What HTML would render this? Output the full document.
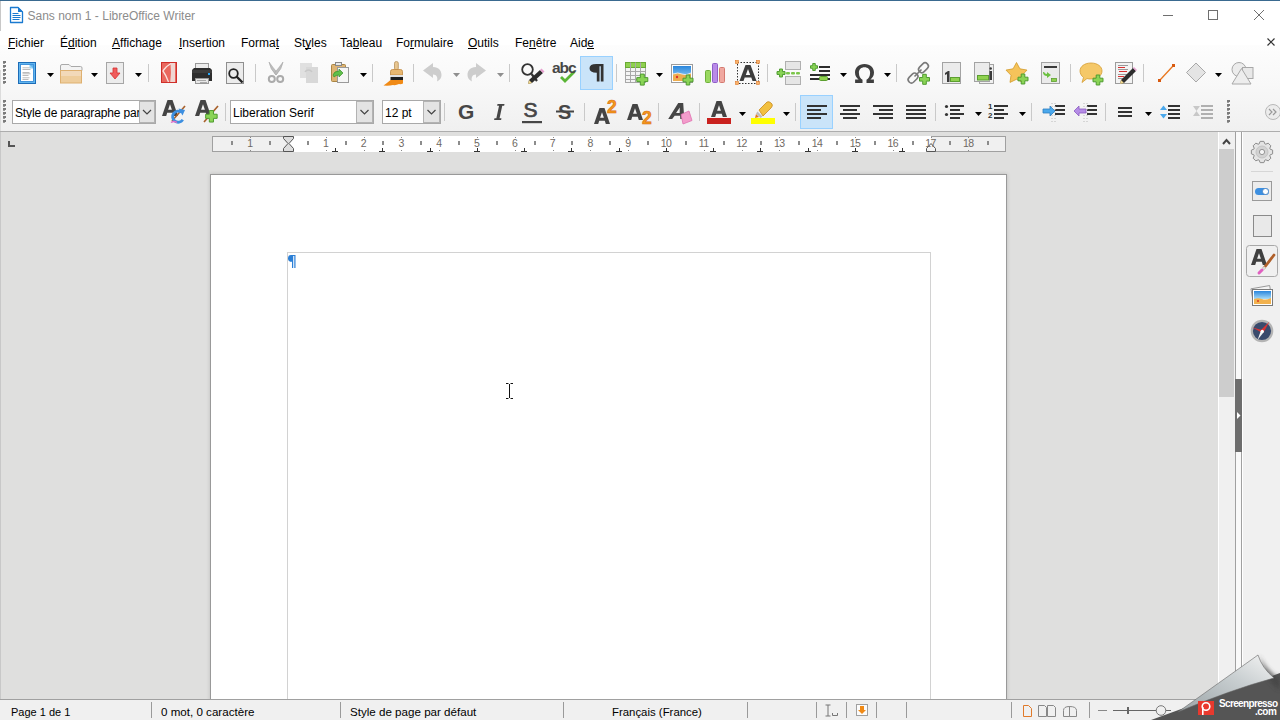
<!DOCTYPE html>
<html><head><meta charset="utf-8">
<style>
*{box-sizing:border-box}
html,body{margin:0;padding:0}
body{width:1280px;height:720px;position:relative;overflow:hidden;background:#dfdfde;font-family:"Liberation Sans",sans-serif;font-size:12px;color:#000}
.a{position:absolute}
.t{position:absolute;white-space:pre;line-height:12px}
u{text-decoration:none;position:relative}u::after{content:"";position:absolute;left:0;right:0;bottom:1px;height:1px;background:#000}
svg{position:absolute;overflow:visible}
.sep{position:absolute;width:1px;background:#c8c8c8}
.arr{position:absolute;width:0;height:0;border-left:3.5px solid transparent;border-right:3.5px solid transparent;border-top:4px solid #000}
.combo{position:absolute;background:#fff;border:1px solid #a9a9a9;height:24px}
.combo .btn{position:absolute;right:0;top:0;bottom:0;background:#e3e3e3;border-left:1px solid #b9b9b9}
.grip{position:absolute;width:3px}
.grip i{position:absolute;left:0;width:3px;height:2px;background:#8c8c8c}
.st{position:absolute;white-space:pre;line-height:12px;font-size:11.6px;top:706px}
.ssep{position:absolute;top:702px;height:16px;width:1px;background:#9a9a9a}
</style></head><body>
<!-- title bar -->
<div class="a" style="left:0;top:0;width:1280px;height:45px;background:#fff"></div>
<div class="a" style="left:0;top:0;width:1280px;height:1px;background:#3a6a90"></div>
<div class="a" style="left:0;top:1px;width:1px;height:30px;background:#c8c8c8"></div>
<div class="t" style="left:27.5px;top:10px;color:#8c8c8c">Sans nom 1 - LibreOffice Writer</div>

<!-- toolbar gradient -->
<div class="a" style="left:0;top:45px;width:1280px;height:86px;background:linear-gradient(#fdfdfd 0px,#fbfbfb 14px,#f8f8f8 40px,#f0f0f0 86px)"></div>
<div class="a" style="left:0;top:131px;width:1280px;height:1px;background:#adadad"></div>

<!-- menu -->
<div class="t" style="left:8px;top:37px"><u>F</u>ichier</div>
<div class="t" style="left:60px;top:37px">É<u>d</u>ition</div>
<div class="t" style="left:112px;top:37px"><u>A</u>ffichage</div>
<div class="t" style="left:179px;top:37px"><u>I</u>nsertion</div>
<div class="t" style="left:241px;top:37px">Forma<u>t</u></div>
<div class="t" style="left:294px;top:37px">St<u>y</u>les</div>
<div class="t" style="left:340px;top:37px">Ta<u>b</u>leau</div>
<div class="t" style="left:396px;top:37px">Fo<u>r</u>mulaire</div>
<div class="t" style="left:468px;top:37px"><u>O</u>utils</div>
<div class="t" style="left:515px;top:37px">Fe<u>n</u>être</div>
<div class="t" style="left:570px;top:37px">Aid<u>e</u></div>

<!-- doc area -->
<div class="a" style="left:0;top:132px;width:1218px;height:567px;background:#dfdfde"></div>
<div class="a" style="left:0;top:132px;width:1px;height:567px;background:#c8c8c8"></div>

<!-- page -->
<div class="a" style="left:210px;top:174px;width:797px;height:540px;background:#fff;border:1px solid #999;box-shadow:0 0 4px rgba(0,0,0,.16)"></div>
<div class="a" style="left:287px;top:252px;width:644px;height:460px;border:1px solid #d2d2d2;border-bottom:none"></div>

<!-- status bar -->
<div class="a" style="left:0;top:699px;width:1280px;height:21px;background:#f0f0f0;border-top:1px solid #a0a0a0"></div>
<div class="st" style="left:11px;font-size:11px">Page 1 de 1</div>
<div class="ssep" style="left:151px"></div>
<div class="st" style="left:161px">0 mot, 0 caractère</div>
<div class="ssep" style="left:340px"></div>
<div class="st" style="left:350px">Style de page par défaut</div>
<div class="ssep" style="left:563px"></div>
<div class="st" style="left:612px;font-size:11.4px">Français (France)</div>
<div class="ssep" style="left:747px"></div>
<div class="ssep" style="left:816px"></div>
<div class="ssep" style="left:846px"></div>
<div class="ssep" style="left:876px"></div>
<div class="ssep" style="left:906px"></div>
<div class="ssep" style="left:1011px"></div>
<div class="ssep" style="left:1089px"></div>

<!-- scrollbar + sidebar -->
<div class="a" style="left:1218px;top:132px;width:1px;height:567px;background:#fff"></div>
<div class="a" style="left:1219px;top:132px;width:16px;height:567px;background:#f0f0f0"></div>
<div class="a" style="left:1219px;top:149px;width:15px;height:248px;background:#cdcdcd"></div>
<div class="a" style="left:1235px;top:132px;width:1px;height:567px;background:#a0a0a0"></div>
<div class="a" style="left:1236px;top:132px;width:5px;height:567px;background:#f9f9f9"></div>
<div class="a" style="left:1241px;top:132px;width:1px;height:567px;background:#a0a0a0"></div>
<div class="a" style="left:1242px;top:132px;width:1px;height:567px;background:#fff"></div>
<div class="a" style="left:1243px;top:132px;width:37px;height:567px;background:#f0f0f0"></div>
<div class="a" style="left:1235px;top:379px;width:7px;height:73px;background:#6d6d6d"></div>

<svg width="1280" height="720" style="position:absolute;left:0;top:0"><rect x="3" y="61" width="3" height="2" fill="#7b7b7b"/><rect x="3" y="63" width="2" height="1" fill="#9d9d9d"/>
<rect x="3" y="65" width="3" height="2" fill="#7b7b7b"/><rect x="3" y="67" width="2" height="1" fill="#9d9d9d"/>
<rect x="3" y="69" width="3" height="2" fill="#7b7b7b"/><rect x="3" y="71" width="2" height="1" fill="#9d9d9d"/>
<rect x="3" y="73" width="3" height="2" fill="#7b7b7b"/><rect x="3" y="75" width="2" height="1" fill="#9d9d9d"/>
<rect x="3" y="77" width="3" height="2" fill="#7b7b7b"/><rect x="3" y="79" width="2" height="1" fill="#9d9d9d"/>
<rect x="3" y="81" width="3" height="2" fill="#7b7b7b"/><rect x="3" y="83" width="2" height="1" fill="#9d9d9d"/>
<rect x="0" y="70" width="1" height="61" fill="#dcdcdc"/>
<rect x="18.5" y="62.5" width="17" height="21" fill="#62b6ee" stroke="#1c6cb8"/>
<rect x="20.5" y="64.5" width="13" height="17" fill="none" stroke="#3a8ad6" stroke-width="0.8"/>
<path d="M21 65h8.5l3.5 3.5v12.5h-12z" fill="#fff"/>
<path d="M29.5 65v3.5h3.5z" fill="#8fd0f4"/>
<rect x="22.5" y="67.5" width="7" height="0.7" fill="#a0a0a0"/>
<rect x="22.5" y="69" width="8" height="0.7" fill="#a0a0a0"/>
<rect x="22.5" y="72" width="7" height="0.7" fill="#a0a0a0"/>
<rect x="22.5" y="73.5" width="8" height="0.7" fill="#a0a0a0"/>
<rect x="22.5" y="75" width="6" height="0.7" fill="#a0a0a0"/>
<rect x="22.5" y="77.5" width="7" height="0.7" fill="#a0a0a0"/>
<rect x="22.5" y="79" width="6" height="0.7" fill="#a0a0a0"/>
<path d="M47 73h7l-3.5 4z" fill="#000"/>
<path d="M60.5 70.5V66q0-1.5 1.5-1.5h7l2 2h9.5q1.5 0 1.5 1.5v2.5z" fill="#f3f3f3" stroke="#a9a9a9"/>
<rect x="60.5" y="70.5" width="21" height="12.5" fill="#eecd9c" stroke="#deb070"/>
<rect x="61" y="71" width="20" height="5" fill="#f2dcc0" opacity="0.8"/>
<path d="M91 73h7l-3.5 4z" fill="#000"/>
<rect x="106.5" y="62.5" width="17" height="21" fill="#ececec" stroke="#a6a6a6"/>
<path d="M113 68h4v5h3l-5 6l-5-6h3z" fill="#f05b5b" stroke="#d63131" stroke-width="0.8"/>
<path d="M135 73h7l-3.5 4z" fill="#000"/>
<rect x="148" y="64" width="1" height="18" fill="#c9c9c9"/>
<rect x="161.5" y="62.5" width="15" height="20" fill="#e9685e" stroke="#cf2f2a"/>
<path d="M170.5 63h4.5v19h-4.8q1.3-9 .3-19z" fill="#efd6d2"/>
<path d="M171 63.5Q165.5 66.5 163 71Q166 75 168.5 82" stroke="#fbe4e0" stroke-width="1.3" fill="none"/>
<rect x="195.5" y="63.5" width="13" height="7" fill="#ededed" stroke="#999"/>
<path d="M194 68h16l2 2v11h-20v-11z" fill="#2e2e2e"/>
<rect x="192" y="70" width="20" height="3" fill="#3d3d3d"/>
<rect x="208" y="73" width="2" height="2" fill="#2aa8f8"/>
<rect x="195.5" y="78.5" width="13" height="5" fill="#e8e8e8" stroke="#999"/>
<rect x="197" y="80" width="9" height="0.8" fill="#999"/><rect x="200" y="82" width="7" height="0.8" fill="#999"/>
<rect x="226.5" y="62.5" width="17" height="21" fill="#ececec" stroke="#8f8f8f"/>
<circle cx="233.5" cy="73.5" r="4.3" fill="none" stroke="#222" stroke-width="1.8"/>
<path d="M236.5 76.5l6 6" stroke="#222" stroke-width="2.4"/>
<rect x="255" y="64" width="1" height="18" fill="#c9c9c9"/>
<path d="M269 62q1 7 7 13l1.5-2q-5-6-8.5-11z" fill="#bdbdbd" stroke="#a8a8a8" stroke-width="0.6"/>
<path d="M283 62q-1 7-7 13l-1.5-2q5-6 8.5-11z" fill="#bdbdbd" stroke="#a8a8a8" stroke-width="0.6"/>
<circle cx="271.8" cy="79" r="3" fill="none" stroke="#ababab" stroke-width="2"/>
<circle cx="280.2" cy="79" r="3" fill="none" stroke="#ababab" stroke-width="2"/>
<rect x="300" y="63" width="12" height="15" fill="#e0e0e0"/>
<rect x="306" y="67" width="12" height="16" fill="#d8d8d8"/>
<path d="M305 72a4 4 0 0 1 7 0" stroke="#c8c8c8" stroke-width="1.5" fill="none"/>
<rect x="331.5" y="64.5" width="14" height="17" rx="1" fill="#deb473" stroke="#a98545"/>
<rect x="335.5" y="62.5" width="6" height="3" fill="#e8e8e8" stroke="#888"/>
<rect x="337.5" y="67.5" width="11" height="15" fill="#f6f6f6" stroke="#9a9a9a"/>
<path d="M333 75q1-4 6-4v-2l4 4l-4 4v-2q-3 0-5 2z" fill="#5fc04a" stroke="#3c8f2a" stroke-width="0.7"/>
<path d="M360 73h7l-3.5 4z" fill="#000"/>
<rect x="372" y="64" width="1" height="18" fill="#c9c9c9"/>
<rect x="394.5" y="61.5" width="3.8" height="8.5" rx="1.8" fill="#e8c690" stroke="#b8905a" stroke-width="0.8"/>
<path d="M390.5 75V71.5q0-2 2-2h8q2 0 2 2V75z" fill="#e9b870" stroke="#c08840" stroke-width="0.8"/>
<rect x="390.5" y="75" width="12.5" height="2" fill="#e2e2e2"/>
<rect x="390.5" y="77" width="12.5" height="3" fill="#1e1e1e"/>
<path d="M390.5 80h12.5v3.5q-2 1-4 .5q-3 1.5-6 1q-4 1-9.5 .5q3-2 7-5.5z" fill="#f08a16"/>
<rect x="413" y="64" width="1" height="18" fill="#c9c9c9"/>
<path d="M423 70.5L433 63V67C439 67 441.5 71 441.5 75C441.5 78 440 80 437 81.5C438 78 437 74.5 433 74.5V78Z" fill="#cdcdcd"/>
<path d="M453 73h7l-3.5 4z" fill="#8f8f8f"/>
<path d="M423 70.5L433 63V67C439 67 441.5 71 441.5 75C441.5 78 440 80 437 81.5C438 78 437 74.5 433 74.5V78Z" fill="#cdcdcd" transform="translate(909 0) scale(-1 1)"/>
<path d="M497 73h7l-3.5 4z" fill="#8f8f8f"/>
<rect x="509" y="64" width="1" height="18" fill="#c9c9c9"/>
<circle cx="527.5" cy="69.5" r="5.3" fill="none" stroke="#333" stroke-width="1.8"/>
<path d="M531.5 74l5.5 7" stroke="#333" stroke-width="2.2"/>
<path d="M540 70l3 3l-11 10l-4 1l1-4z" fill="#2d2d2d"/>
<path d="M540 70l3 3l1.5-1.5l-3-3z" fill="#e79fd0"/>
<path d="M528 84l1-4l3 3z" fill="#f2d88f"/>
<path d="M561 77l4 4l9.5-9.5" stroke="#5ab536" stroke-width="2.8" fill="none"/>
<rect x="580.5" y="56.5" width="32" height="33" fill="#cae4f9" stroke="#99d1ff"/>
<path d="M596.5 64h7v17.5h-2.7v-15.3h-1.3v15.3h-2.7v-8.8q-7.3 0-7.3-4.4t7-4.3z" fill="#333"/>
<rect x="616" y="64" width="1" height="18" fill="#c9c9c9"/>
<rect x="625.5" y="62.5" width="20" height="20" fill="#f4f4f4" stroke="#a8a8a8"/>
<rect x="625.5" y="62.5" width="20" height="5" fill="#8fd14f" stroke="#6aa935"/>
<path d="M630.5 62.5v20" stroke="#a8a8a8"/>
<path d="M635.5 62.5v20" stroke="#a8a8a8"/>
<path d="M640.5 62.5v20" stroke="#a8a8a8"/>
<path d="M625.5 71.5h20" stroke="#a8a8a8"/>
<path d="M625.5 75.5h20" stroke="#a8a8a8"/>
<path d="M625.5 79.5h20" stroke="#a8a8a8"/>
<path d="M640.32 74.10h3.96v3.52h3.52v3.96h-3.52v3.52h-3.96v-3.52h-3.52v-3.96h3.52z" fill="#8ad456" stroke="#4f9c30" stroke-width="1" stroke-linejoin="miter"/>
<path d="M656 73h7l-3.5 4z" fill="#000"/>
<rect x="671.5" y="64.5" width="21" height="18" fill="#fff" stroke="#9c9c9c"/>
<rect x="673" y="66" width="18" height="15" fill="url(#sky)"/>
<path d="M673 74q5-2 9 0t9-1v8h-18z" fill="#eeae50"/><path d="M673 74q5-2 9 0t9-1" stroke="#f4f8fc" stroke-width="0.8" fill="none"/>
<circle cx="677" cy="77" r="1.2" fill="#e0302a"/>
<path d="M686.20 75.00h3.60v3.20h3.20v3.60h-3.20v3.20h-3.60v-3.20h-3.20v-3.60h3.20z" fill="#8ad456" stroke="#4f9c30" stroke-width="1" stroke-linejoin="miter"/>
<rect x="705.5" y="70.5" width="5" height="12" rx="1" fill="#9ad860" stroke="#6fb13c"/>
<rect x="712.5" y="63.5" width="5" height="19" rx="1" fill="#b98ae8" stroke="#8e5fc8"/>
<rect x="719.5" y="67.5" width="5" height="15" rx="1" fill="#f0a8a0" stroke="#d47a70"/>
<rect x="737.5" y="62.5" width="21" height="21" fill="none" stroke="#333" stroke-dasharray="1.5 1.5"/>
<rect x="735.5" y="60.5" width="3" height="3" fill="#f8b26a" stroke="#e07a2a" stroke-width="0.6"/>
<rect x="756.5" y="60.5" width="3" height="3" fill="#f8b26a" stroke="#e07a2a" stroke-width="0.6"/>
<rect x="735.5" y="81.5" width="3" height="3" fill="#f8b26a" stroke="#e07a2a" stroke-width="0.6"/>
<rect x="756.5" y="81.5" width="3" height="3" fill="#f8b26a" stroke="#e07a2a" stroke-width="0.6"/>
<path d="M745.5 65h5l6 16h-4l-1.2-3.5h-6.6l-1.2 3.5h-4zm2.5 4l-2.2 6h4.4z" fill="#3d3d3d"/>
<rect x="767" y="64" width="1" height="18" fill="#c9c9c9"/>
<rect x="785.5" y="61.5" width="15" height="8" fill="#e6e6e6" stroke="#b0b0b0"/>
<rect x="785.5" y="76.5" width="15" height="8" fill="#e6e6e6" stroke="#b0b0b0"/>
<rect x="786" y="72" width="4" height="2.5" rx="1" fill="#7cc64a"/>
<rect x="791" y="72" width="4" height="2.5" rx="1" fill="#7cc64a"/>
<rect x="796" y="72" width="4" height="2.5" rx="1" fill="#7cc64a"/>
<path d="M779.56 69.00h2.88v2.56h2.56v2.88h-2.56v2.56h-2.88v-2.56h-2.56v-2.88h2.56z" fill="#8ad456" stroke="#4f9c30" stroke-width="1" stroke-linejoin="miter"/>
<rect x="819" y="66" width="11" height="2" fill="#2d2d2d"/><rect x="819" y="70" width="11" height="2" fill="#2d2d2d"/>
<rect x="810" y="74" width="20" height="2" fill="#2d2d2d"/><rect x="810" y="78" width="20" height="2" fill="#2d2d2d"/>
<path d="M812.74 63.50h2.52v2.24h2.24v2.52h-2.24v2.24h-2.52v-2.24h-2.24v-2.52h2.24z" fill="#8ad456" stroke="#4f9c30" stroke-width="1" stroke-linejoin="miter"/>
<rect x="819.5" y="76.5" width="8" height="4" rx="1" fill="#8fd14f" stroke="#5c9f30"/>
<path d="M840 73h7l-3.5 4z" fill="#000"/>
<path d="M864.5 64c-6 0-9.5 3.8-9.5 8.5c0 3.5 1.8 5.7 3.6 7h-3.5v3.5h7.4v-3.2c-2-1-3.6-3.5-3.6-7c0-3.3 2.3-5.5 5.6-5.5s5.6 2.2 5.6 5.5c0 3.5-1.6 6-3.6 7v3.2h7.4v-3.5h-3.5c1.8-1.3 3.6-3.5 3.6-7c0-4.7-3.5-8.5-9.5-8.5z" fill="#3f3f3f"/>
<path d="M884 73h7l-3.5 4z" fill="#000"/>
<rect x="896" y="64" width="1" height="18" fill="#c9c9c9"/>
<rect x="918" y="64.5" width="11" height="6.5" rx="3.2" fill="none" stroke="#7a7a7a" stroke-width="1.6" transform="rotate(-45 923.5 67.8)"/>
<rect x="907.5" y="74.8" width="11" height="6.5" rx="3.2" fill="none" stroke="#7a7a7a" stroke-width="1.6" transform="rotate(-45 913 78)"/>
<path d="M914.5 76.5l7-7" stroke="#7a7a7a" stroke-width="1.6"/>
<path d="M922.70 74.30h3.60v3.20h3.20v3.60h-3.20v3.20h-3.60v-3.20h-3.20v-3.60h3.20z" fill="#8ad456" stroke="#4f9c30" stroke-width="1" stroke-linejoin="miter"/>
<rect x="942.5" y="62.5" width="18" height="21" fill="#ebebeb" stroke="#a3a3a3"/>
<path d="M945 73l3-2h1.5v11h-2.5v-8l-2 1z" fill="#3a3a3a"/>
<rect x="950.5" y="77.5" width="9" height="4" fill="#8fd14f" stroke="#5c9f30"/>
<rect x="979.5" y="64.5" width="14" height="19" fill="#f0f0f0" stroke="#a3a3a3"/>
<rect x="974.5" y="62.5" width="15" height="19" fill="#ebebeb" stroke="#a3a3a3"/>
<rect x="989.5" y="71" width="2.5" height="9" fill="#3a3a3a"/><circle cx="990.7" cy="68.5" r="1.2" fill="#3a3a3a"/>
<rect x="977.5" y="75.5" width="11" height="4.5" fill="#8fd14f" stroke="#5c9f30"/>
<polygon points="1016.5,62.5 1019.9,68.8 1027.0,70.1 1022.0,75.3 1023.0,82.4 1016.5,79.3 1010.0,82.4 1011.0,75.3 1006.0,70.1 1013.1,68.8" fill="#f5c35a" stroke="#d29a2a" stroke-width="0.8" stroke-linejoin="round"/>
<path d="M1021.20 74.00h3.60v3.20h3.20v3.60h-3.20v3.20h-3.60v-3.20h-3.20v-3.60h3.20z" fill="#8ad456" stroke="#4f9c30" stroke-width="1" stroke-linejoin="miter"/>
<rect x="1041.5" y="62.5" width="18" height="21" fill="#ebebeb" stroke="#a3a3a3"/>
<rect x="1044" y="66" width="13" height="2" fill="#3a3a3a"/>
<path d="M1043 72q0 4 4 4v2l4-3l-4-3v2q-2 0-3-2z" fill="#6cc140"/>
<rect x="1051.5" y="78.5" width="5" height="3" fill="#8fd14f" stroke="#5c9f30" stroke-width="0.8"/>
<rect x="1070" y="64" width="1" height="18" fill="#c9c9c9"/>
<path d="M1091 63c6.5 0 11 3.5 11 8s-4.5 8-11 8c-1.5 0-2.5 0-4-.5l-5 4l1.5-5c-2-1.5-3.5-4-3.5-6.5c0-4.5 4.5-8 11-8z" fill="#f5c868" stroke="#d49d33" stroke-width="0.8"/>
<path d="M1096.20 75.00h3.60v3.20h3.20v3.60h-3.20v3.20h-3.60v-3.20h-3.20v-3.60h3.20z" fill="#8ad456" stroke="#4f9c30" stroke-width="1" stroke-linejoin="miter"/>
<rect x="1115.5" y="62.5" width="17" height="21" fill="#f3f3f3" stroke="#9c9c9c"/>
<rect x="1118" y="65" width="10" height="1" fill="#999"/>
<rect x="1118" y="67" width="7" height="1" fill="#d93030"/>
<rect x="1118" y="69" width="10" height="1" fill="#999"/>
<rect x="1119" y="71" width="8" height="1" fill="#d93030"/>
<rect x="1118" y="74" width="10" height="1" fill="#999"/>
<rect x="1118" y="76" width="6" height="1" fill="#d93030"/>
<rect x="1118" y="78" width="9" height="1" fill="#999"/>
<path d="M1133 68l3 3l-12 12l-4 1l1-4z" fill="#2d2d2d"/><path d="M1133 68l3 3l1-1l-3-3z" fill="#e79fd0"/><path d="M1120 84l1-4l3 3z" fill="#f2d88f"/>
<rect x="1143" y="64" width="1" height="18" fill="#c9c9c9"/>
<path d="M1160 80l13-14" stroke="#e8761e" stroke-width="1.3"/>
<rect x="1158" y="79" width="3" height="3" fill="#d85a10"/><rect x="1172" y="64" width="3" height="3" fill="#d85a10"/>
<path d="M1196 63l9.5 9.5l-9.5 9.5l-9.5-9.5z" fill="#e4e4e4" stroke="#a8a8a8"/>
<path d="M1215 73h7l-3.5 4z" fill="#000"/>
<circle cx="1239" cy="69.5" r="7" fill="#ececec" stroke="#a8a8a8"/>
<rect x="1242.5" y="67.5" width="10.5" height="11" fill="#e8e8e8" stroke="#a8a8a8"/>
<path d="M1241.5 68.5l9.5 15.5h-19z" fill="#ededed" stroke="#a8a8a8"/>
<rect x="3" y="100" width="3" height="2" fill="#7b7b7b"/><rect x="3" y="102" width="2" height="1" fill="#9d9d9d"/>
<rect x="3" y="104" width="3" height="2" fill="#7b7b7b"/><rect x="3" y="106" width="2" height="1" fill="#9d9d9d"/>
<rect x="3" y="108" width="3" height="2" fill="#7b7b7b"/><rect x="3" y="110" width="2" height="1" fill="#9d9d9d"/>
<rect x="3" y="112" width="3" height="2" fill="#7b7b7b"/><rect x="3" y="114" width="2" height="1" fill="#9d9d9d"/>
<rect x="3" y="116" width="3" height="2" fill="#7b7b7b"/><rect x="3" y="118" width="2" height="1" fill="#9d9d9d"/>
<rect x="3" y="120" width="3" height="2" fill="#7b7b7b"/><rect x="3" y="122" width="2" height="1" fill="#9d9d9d"/>
<rect x="12.5" y="100.5" width="143" height="23" fill="#fff" stroke="#a9a9a9"/>
<rect x="139.5" y="101.5" width="15" height="21" fill="#e3e3e3" stroke="#b3b3b3"/>
<path d="M143.0 110l4 4l4-4" stroke="#444" stroke-width="1.2" fill="none"/>
<path d="M167.5 100h5l5.5 16h-4.2l-1-3.2h-5.6l-1 3.2h-4.2zm2.5 4.2l-1.9 5.5h3.8z" fill="#444"/>
<path d="M172 121l13-15" stroke="#a8602a" stroke-width="1.6"/>
<path d="M182.8 119.8a5.6 5.6 0 1 1-1.2-7.6" stroke="#3d8fe0" stroke-width="2.8" fill="none"/><path d="M178.5 108.5l6.5 1.5l-2.5 5.5z" fill="#3d8fe0"/>
<path d="M171 122.5q3-2 6 0" stroke="#e070c8" stroke-width="1.5" fill="none"/>
<path d="M200.5 100h5l5.5 16h-4.2l-1-3.2h-5.6l-1 3.2h-4.2zm2.5 4.2l-1.9 5.5h3.8z" fill="#444"/>
<path d="M204 122l14-16" stroke="#a8602a" stroke-width="1.6"/>
<path d="M209.33 110.55h4.14v3.68h3.68v4.14h-3.68v3.68h-4.14v-3.68h-3.68v-4.14h3.68z" fill="#8ad456" stroke="#4f9c30" stroke-width="1" stroke-linejoin="miter"/>
<rect x="225" y="103" width="1" height="18" fill="#c9c9c9"/>
<rect x="230.5" y="100.5" width="143" height="23" fill="#fff" stroke="#a9a9a9"/>
<rect x="356.5" y="101.5" width="16" height="21" fill="#e3e3e3" stroke="#b3b3b3"/>
<path d="M360.5 110l4 4l4-4" stroke="#444" stroke-width="1.2" fill="none"/>
<rect x="382.5" y="100.5" width="58" height="23" fill="#fff" stroke="#a9a9a9"/>
<rect x="423.5" y="101.5" width="16" height="21" fill="#e3e3e3" stroke="#b3b3b3"/>
<path d="M427.5 110l4 4l4-4" stroke="#444" stroke-width="1.2" fill="none"/>
<rect x="444" y="103" width="1" height="18" fill="#c9c9c9"/>
<path d="M497.5 104h7l-.35 1.8h-1.9l-2.7 12.4h1.9l-.35 1.8h-7l.35-1.8h1.9l2.7-12.4h-1.9z" fill="#464646"/>
<rect x="522" y="121" width="20" height="2.2" fill="#464646"/>
<rect x="556" y="110.5" width="18" height="2" fill="#464646"/>
<rect x="584" y="103" width="1" height="18" fill="#c9c9c9"/>
<path d="M599.5 108h5l5.5 16h-4.2l-1-3.2h-5.6l-1 3.2h-4.2zm2.5 4.2l-1.9 5.5h3.8z" fill="#444"/>
<path d="M632.5 104h5l5.5 16h-4.2l-1-3.2h-5.6l-1 3.2h-4.2zm2.5 4.2l-1.9 5.5h3.8z" fill="#444"/>
<rect x="658" y="103" width="1" height="18" fill="#c9c9c9"/>
<path d="M676.5 103h5l4.5 16h-4l-.9-3.2h-5.4l-1.8 3.2h-4zm2.5 4.5l-2.5 5.5h3.6z" fill="#464646" transform="translate(676 111) skewX(-12) translate(-676 -111)"/>
<path d="M681 114.5l8-3.5l3 9.5l-9 3.5z" fill="#f39ccb" stroke="#e070b0" stroke-width="0.8"/>
<rect x="699" y="103" width="1" height="18" fill="#c9c9c9"/>
<path d="M716.5 101h5l5.5 16h-4.2l-1-3.2h-5.6l-1 3.2h-4.2zm2.5 4.2l-1.9 5.5h3.8z" fill="#444"/>
<rect x="707" y="118" width="24" height="6" fill="#c9211e"/>
<path d="M739 112h7l-3.5 4z" fill="#000"/>
<path d="M759 110l8-8q2-1 4 1l1 1q1 2-1 4l-8 8z" fill="#f2c040" stroke="#c88a20" stroke-width="0.8"/>
<path d="M757.5 111.5l5 5l-2 1.5l-4.5-4.5z" fill="#bdbdbd"/><path d="M756 114l3 3l-4 1z" fill="#e07a20"/>
<rect x="751" y="118" width="24" height="6" fill="#ffff00"/>
<path d="M783 112h7l-3.5 4z" fill="#000"/>
<rect x="795" y="103" width="1" height="18" fill="#c9c9c9"/>
<rect x="800.5" y="95.5" width="32" height="33" fill="#cae4f9" stroke="#99d1ff"/>
<rect x="807" y="105" width="20" height="2" fill="#333"/>
<rect x="807" y="109" width="14" height="2" fill="#333"/>
<rect x="807" y="113" width="20" height="2" fill="#333"/>
<rect x="807" y="117" width="14" height="2" fill="#333"/>
<rect x="840" y="105" width="20" height="2" fill="#333"/>
<rect x="843" y="109" width="14" height="2" fill="#333"/>
<rect x="840" y="113" width="20" height="2" fill="#333"/>
<rect x="843" y="117" width="14" height="2" fill="#333"/>
<rect x="873" y="105" width="20" height="2" fill="#333"/>
<rect x="879" y="109" width="14" height="2" fill="#333"/>
<rect x="873" y="113" width="20" height="2" fill="#333"/>
<rect x="879" y="117" width="14" height="2" fill="#333"/>
<rect x="906" y="105" width="20" height="2" fill="#333"/>
<rect x="906" y="109" width="20" height="2" fill="#333"/>
<rect x="906" y="113" width="20" height="2" fill="#333"/>
<rect x="906" y="117" width="20" height="2" fill="#333"/>
<rect x="935" y="103" width="1" height="18" fill="#c9c9c9"/>
<circle cx="946.5" cy="106.5" r="1.6" fill="#333"/>
<circle cx="946.5" cy="114.5" r="1.6" fill="#333"/>
<rect x="950" y="105" width="14" height="2" fill="#333"/>
<rect x="950" y="109" width="10" height="2" fill="#333"/>
<rect x="950" y="113" width="14" height="2" fill="#333"/>
<rect x="950" y="117" width="10" height="2" fill="#333"/>
<path d="M975 112h7l-3.5 4z" fill="#000"/>
<rect x="994" y="105" width="14" height="2" fill="#333"/>
<rect x="994" y="109" width="10" height="2" fill="#333"/>
<rect x="994" y="113" width="14" height="2" fill="#333"/>
<rect x="994" y="117" width="10" height="2" fill="#333"/>
<path d="M1019 112h7l-3.5 4z" fill="#000"/>
<rect x="1031" y="103" width="1" height="18" fill="#c9c9c9"/>
<rect x="1055" y="105" width="10" height="2" fill="#333"/>
<rect x="1055" y="109" width="10" height="2" fill="#333"/>
<rect x="1055" y="113" width="10" height="2" fill="#333"/>
<path d="M1055 103v19M1052 103v19" stroke="#b8b8b8" stroke-width="1" stroke-dasharray="1 2"/>
<path d="M1043 109h7v-3l5 5l-5 5v-3h-7z" fill="#4aa8ec" stroke="#2e7fc0" stroke-width="0.8"/>
<rect x="1087" y="105" width="10" height="2" fill="#333"/>
<rect x="1087" y="109" width="10" height="2" fill="#333"/>
<rect x="1087" y="113" width="10" height="2" fill="#333"/>
<path d="M1087 103v19M1084 103v19" stroke="#b8b8b8" stroke-width="1" stroke-dasharray="1 2"/>
<path d="M1086 109h-7v-3l-5 5l5 5v-3h7z" fill="#b58ce6" stroke="#8a5cc0" stroke-width="0.8"/>
<rect x="1105" y="103" width="1" height="18" fill="#c9c9c9"/>
<rect x="1118" y="107" width="14" height="2" fill="#333"/>
<rect x="1118" y="111" width="14" height="2" fill="#333"/>
<rect x="1118" y="115" width="14" height="2" fill="#333"/>
<path d="M1145 112h7l-3.5 4z" fill="#000"/>
<rect x="1168" y="105" width="12" height="2" fill="#333"/>
<rect x="1168" y="109" width="12" height="2" fill="#333"/>
<rect x="1168" y="113" width="12" height="2" fill="#333"/>
<rect x="1168" y="117" width="12" height="2" fill="#333"/>
<path d="M1160 110l3.5-4.5l3.5 4.5z" fill="#4aa8ec"/><path d="M1160 114l3.5 4.5l3.5-4.5z" fill="#4aa8ec"/>
<rect x="1201" y="105" width="12" height="2" fill="#b0b0b0"/>
<rect x="1201" y="109" width="12" height="2" fill="#b0b0b0"/>
<rect x="1201" y="113" width="12" height="2" fill="#b0b0b0"/>
<rect x="1201" y="117" width="12" height="2" fill="#b0b0b0"/>
<path d="M1193 106h7l-3.5 5l3.5 5h-7l3.5-5z" fill="#c8c8c8"/>
<rect x="1227" y="100" width="3" height="2" fill="#7b7b7b"/><rect x="1227" y="102" width="2" height="1" fill="#9d9d9d"/>
<rect x="1227" y="104" width="3" height="2" fill="#7b7b7b"/><rect x="1227" y="106" width="2" height="1" fill="#9d9d9d"/>
<rect x="1227" y="108" width="3" height="2" fill="#7b7b7b"/><rect x="1227" y="110" width="2" height="1" fill="#9d9d9d"/>
<rect x="1227" y="112" width="3" height="2" fill="#7b7b7b"/><rect x="1227" y="114" width="2" height="1" fill="#9d9d9d"/>
<rect x="1227" y="116" width="3" height="2" fill="#7b7b7b"/><rect x="1227" y="118" width="2" height="1" fill="#9d9d9d"/>
<rect x="1227" y="120" width="3" height="2" fill="#7b7b7b"/><rect x="1227" y="122" width="2" height="1" fill="#9d9d9d"/>
<circle cx="1273" cy="112" r="7.5" fill="#ececec" stroke="#b8b8b8"/>
<path d="M1269 109l3 3l-3 3M1273 109l3 3l-3 3" stroke="#999" stroke-width="1.2" fill="none"/>
<path d="M8 141h2v4h5v2h-7z" fill="#555"/>
<rect x="212.5" y="136.5" width="793" height="15" fill="#fff" stroke="#a0a0a0"/>
<rect x="213" y="137" width="75" height="14" fill="#f0f0f0"/>
<rect x="931" y="137" width="74" height="14" fill="#f0f0f0"/>
<rect x="288" y="136" width="643" height="1" fill="#fff"/>
<rect x="288" y="151" width="643" height="1" fill="#fff"/>
<rect x="231" y="141" width="2" height="4" fill="#8c8c8c"/>
<rect x="250" y="137" width="1" height="1" fill="#888"/><rect x="250" y="150" width="1" height="1" fill="#888"/>
<rect x="269" y="141" width="2" height="4" fill="#8c8c8c"/>
<rect x="307" y="141" width="2" height="4" fill="#8c8c8c"/>
<rect x="326" y="137" width="1" height="1" fill="#888"/><rect x="326" y="150" width="1" height="1" fill="#888"/>
<rect x="345" y="141" width="2" height="4" fill="#8c8c8c"/>
<rect x="364" y="137" width="1" height="1" fill="#888"/><rect x="364" y="150" width="1" height="1" fill="#888"/>
<rect x="382" y="141" width="2" height="4" fill="#8c8c8c"/>
<rect x="401" y="137" width="1" height="1" fill="#888"/><rect x="401" y="150" width="1" height="1" fill="#888"/>
<rect x="420" y="141" width="2" height="4" fill="#8c8c8c"/>
<rect x="439" y="137" width="1" height="1" fill="#888"/><rect x="439" y="150" width="1" height="1" fill="#888"/>
<rect x="458" y="141" width="2" height="4" fill="#8c8c8c"/>
<rect x="477" y="137" width="1" height="1" fill="#888"/><rect x="477" y="150" width="1" height="1" fill="#888"/>
<rect x="496" y="141" width="2" height="4" fill="#8c8c8c"/>
<rect x="515" y="137" width="1" height="1" fill="#888"/><rect x="515" y="150" width="1" height="1" fill="#888"/>
<rect x="534" y="141" width="2" height="4" fill="#8c8c8c"/>
<rect x="553" y="137" width="1" height="1" fill="#888"/><rect x="553" y="150" width="1" height="1" fill="#888"/>
<rect x="571" y="141" width="2" height="4" fill="#8c8c8c"/>
<rect x="590" y="137" width="1" height="1" fill="#888"/><rect x="590" y="150" width="1" height="1" fill="#888"/>
<rect x="609" y="141" width="2" height="4" fill="#8c8c8c"/>
<rect x="628" y="137" width="1" height="1" fill="#888"/><rect x="628" y="150" width="1" height="1" fill="#888"/>
<rect x="647" y="141" width="2" height="4" fill="#8c8c8c"/>
<rect x="666" y="137" width="1" height="1" fill="#888"/><rect x="666" y="150" width="1" height="1" fill="#888"/>
<rect x="685" y="141" width="2" height="4" fill="#8c8c8c"/>
<rect x="704" y="137" width="1" height="1" fill="#888"/><rect x="704" y="150" width="1" height="1" fill="#888"/>
<rect x="723" y="141" width="2" height="4" fill="#8c8c8c"/>
<rect x="742" y="137" width="1" height="1" fill="#888"/><rect x="742" y="150" width="1" height="1" fill="#888"/>
<rect x="760" y="141" width="2" height="4" fill="#8c8c8c"/>
<rect x="779" y="137" width="1" height="1" fill="#888"/><rect x="779" y="150" width="1" height="1" fill="#888"/>
<rect x="798" y="141" width="2" height="4" fill="#8c8c8c"/>
<rect x="817" y="137" width="1" height="1" fill="#888"/><rect x="817" y="150" width="1" height="1" fill="#888"/>
<rect x="836" y="141" width="2" height="4" fill="#8c8c8c"/>
<rect x="855" y="137" width="1" height="1" fill="#888"/><rect x="855" y="150" width="1" height="1" fill="#888"/>
<rect x="874" y="141" width="2" height="4" fill="#8c8c8c"/>
<rect x="893" y="137" width="1" height="1" fill="#888"/><rect x="893" y="150" width="1" height="1" fill="#888"/>
<rect x="912" y="141" width="2" height="4" fill="#8c8c8c"/>
<rect x="931" y="137" width="1" height="1" fill="#888"/><rect x="931" y="150" width="1" height="1" fill="#888"/>
<rect x="949" y="141" width="2" height="4" fill="#8c8c8c"/>
<rect x="968" y="137" width="1" height="1" fill="#888"/><rect x="968" y="150" width="1" height="1" fill="#888"/>
<rect x="987" y="141" width="2" height="4" fill="#8c8c8c"/>
<path d="M332 151.5h6M335.5 148v3.5" stroke="#333" stroke-width="1"/>
<path d="M379 151.5h6M382.5 148v3.5" stroke="#333" stroke-width="1"/>
<path d="M427 151.5h6M430.5 148v3.5" stroke="#333" stroke-width="1"/>
<path d="M474 151.5h6M477.5 148v3.5" stroke="#333" stroke-width="1"/>
<path d="M521 151.5h6M524.5 148v3.5" stroke="#333" stroke-width="1"/>
<path d="M568 151.5h6M571.5 148v3.5" stroke="#333" stroke-width="1"/>
<path d="M616 151.5h6M619.5 148v3.5" stroke="#333" stroke-width="1"/>
<path d="M663 151.5h6M666.5 148v3.5" stroke="#333" stroke-width="1"/>
<path d="M710 151.5h6M713.5 148v3.5" stroke="#333" stroke-width="1"/>
<path d="M757 151.5h6M760.5 148v3.5" stroke="#333" stroke-width="1"/>
<path d="M805 151.5h6M808.5 148v3.5" stroke="#333" stroke-width="1"/>
<path d="M852 151.5h6M855.5 148v3.5" stroke="#333" stroke-width="1"/>
<path d="M899 151.5h6M902.5 148v3.5" stroke="#333" stroke-width="1"/>
<path d="M283.5 136.5h10v2l-4.5 5l4.5 5v3h-10v-3l4.5-5l-4.5-5z" fill="#ddd" stroke="#555" stroke-width="1"/>
<path d="M926.5 151.5v-3l4.5-5l4.5 5v3z" fill="#f4f4f4" stroke="#555" stroke-width="1"/>
<path d="M291 255h4.5v13h-1.2v-12h-1.1v12h-1.2v-6.2q-4 0-4-3.4t3-3.4z" fill="#2b7fd6"/>
<path d="M506 383.5h2.5M510.5 383.5h2.5M509.5 384v14M506 398.5h2.5M510.5 398.5h2.5" stroke="#111" stroke-width="1"/>
<path d="M1223 144l3.5-4l3.5 4" stroke="#444" stroke-width="2" fill="none"/>
<path d="M1237 412l3.5 3.5l-3.5 3.5z" fill="#fff"/>
<path d="M1270.09 149.09L1272.64 150.14L1272.64 153.86L1270.09 154.91L1269.78 155.66L1270.84 158.21L1268.21 160.84L1265.66 159.78L1264.91 160.09L1263.86 162.64L1260.14 162.64L1259.09 160.09L1258.34 159.78L1255.79 160.84L1253.16 158.21L1254.22 155.66L1253.91 154.91L1251.36 153.86L1251.36 150.14L1253.91 149.09L1254.22 148.34L1253.16 145.79L1255.79 143.16L1258.34 144.22L1259.09 143.91L1260.14 141.36L1263.86 141.36L1264.91 143.91L1265.66 144.22L1268.21 143.16L1270.84 145.79L1269.78 148.34Z" fill="#e4e4e4" stroke="#8c8c8c" stroke-width="1" stroke-linejoin="round"/>
<circle cx="1262" cy="152" r="6" fill="#d2d2d2" stroke="#c4c4c4"/><circle cx="1262" cy="152" r="2.6" fill="#f6f6f6" stroke="#8c8c8c" stroke-width="0.9"/>
<rect x="1251" y="171" width="22" height="1" fill="#d6d6d6"/>
<rect x="1252.5" y="181.5" width="19" height="19" fill="#ececec" stroke="#9a9a9a"/>
<rect x="1255" y="188" width="14" height="7" rx="3.5" fill="#3d8fe0"/><circle cx="1265.5" cy="191.5" r="3" fill="#fff" stroke="#2a6ab0" stroke-width="0.6"/>
<rect x="1253.5" y="215.5" width="18" height="21" fill="#e9e9e9" stroke="#8a8a8a"/>
<rect x="1246.5" y="245.5" width="31" height="31" rx="3" fill="#f0f0f0" stroke="#a8a8a8"/>
<path d="M1256.5 249h5l5.5 16h-4.2l-1-3.2h-5.6l-1 3.2h-4.2zm2.5 4.2l-1.9 5.5h3.8z" fill="#3f3f3f"/>
<path d="M1264 268l10-13" stroke="#b0602a" stroke-width="2.8" stroke-linecap="round"/><path d="M1262 270.5l3-3.5" stroke="#d8d8d8" stroke-width="2.6"/><path d="M1259 273l3-3" stroke="#e060c0" stroke-width="3" stroke-linecap="round"/>
<defs><linearGradient id="sky" x1="0" y1="0" x2="0" y2="1"><stop offset="0" stop-color="#2a86dc"/><stop offset="1" stop-color="#a8dcf8"/></linearGradient></defs>
<rect x="1252" y="287" width="19" height="15" fill="#f4f4f4" stroke="#8a8a8a" stroke-width="0.8" transform="rotate(-10 1262 294)"/>
<rect x="1252.5" y="289.5" width="20" height="16" fill="#fff" stroke="#7a7a7a"/>
<rect x="1254" y="291" width="17" height="8" fill="url(#sky)"/><path d="M1254 299q4-1.5 8 0t9-1v6h-17z" fill="#f2b24e"/>
<circle cx="1258" cy="301" r="1" fill="#d83a20"/>
<circle cx="1262" cy="331" r="10.2" fill="#3a4a6c" stroke="#b4b4b4" stroke-width="2.2"/>
<path d="M1269.5 321.5L1263.5 332.5L1261 330z" fill="#d93232"/><path d="M1252.5 327.5L1263 330.3L1262 332.8z" fill="#d93232"/>
<path d="M1261 330.5L1257.5 340L1263.8 332z" fill="#f4f4f4"/><circle cx="1262.3" cy="331.3" r="1.6" fill="#fff"/>
<path d="M10.5 7.5h7.5l4.5 4.5v10.5h-12z" fill="#fff" stroke="#1a7ad0" stroke-width="1.3" stroke-linejoin="round"/>
<path d="M18 7v5h5z" fill="#1a7ad0"/>
<rect x="12.5" y="13" width="6" height="1" fill="#1a7ad0"/>
<rect x="12.5" y="15" width="8" height="1" fill="#1a7ad0"/>
<rect x="12.5" y="17" width="8" height="1" fill="#1a7ad0"/>
<rect x="12.5" y="19" width="7" height="1" fill="#1a7ad0"/>
<rect x="1163" y="15" width="10" height="1" fill="#6f6f6f"/>
<rect x="1208.5" y="10.5" width="9" height="9" fill="none" stroke="#6f6f6f"/>
<path d="M1254 10l10 10M1264 10l-10 10" stroke="#6f6f6f" stroke-width="1"/>
<path d="M1267.5 38.5l7 7M1274.5 38.5l-7 7" stroke="#333" stroke-width="1.2"/>
<path d="M825.5 705h5M825.5 716h5M828 705v11" stroke="#777" stroke-width="1"/><path d="M832.5 713v2.5h5v-2.5" stroke="#777" stroke-width="1" fill="none"/>
<rect x="856.5" y="704.5" width="11" height="11" fill="#fbfbfb" stroke="#a0a0a0"/><path d="M860 706h4v4h2l-4 4l-4-4h2z" fill="#f08a16"/>
<path d="M1023.5 705.5h5l3 3v8h-8z" fill="none" stroke="#e07a2a"/>
<path d="M1038.5 705.5h6l2 2v9h-8zM1047.5 705.5h6l2 2v9h-8z" fill="none" stroke="#888"/>
<path d="M1069.5 706.5q-6 0-6 4v6h6zM1069.5 706.5q7 0 7 4v6h-7z" fill="none" stroke="#888"/>
<rect x="1098" y="710" width="9" height="1" fill="#888"/>
<rect x="1113" y="710" width="58" height="1" fill="#666"/><rect x="1127" y="707" width="2" height="7" fill="#666"/>
<circle cx="1161" cy="710.5" r="4.8" fill="#f0f0f0" stroke="#777"/>
<defs><filter id="blur" x="-50%" y="-50%" width="200%" height="200%"><feGaussianBlur stdDeviation="2"/></filter></defs>
<path d="M1151 720L1280 673V720z" fill="#555"/>
<path d="M1259 655Q1264 668 1278 678L1280 674L1280 690Q1266 683 1259 655z" fill="#444" filter="url(#blur)" opacity="0.8"/>
<defs><linearGradient id="cg" x1="0" y1="1" x2="1" y2="0"><stop offset="0" stop-color="#9aa3a6"/><stop offset="0.6" stop-color="#c9cfd1"/><stop offset="1" stop-color="#f4f4f4"/></linearGradient></defs>
<path d="M1178 712L1258 655Q1262 668 1274 678Q1230 690 1178 712z" fill="url(#cg)" stroke="#666" stroke-width="0.6"/>
<rect x="1198" y="701" width="16" height="14" fill="#e8392e"/>
<circle cx="1206" cy="706.5" r="3.8" fill="none" stroke="#fff" stroke-width="1.6"/><path d="M1202.8 707v8" stroke="#fff" stroke-width="1.6"/><circle cx="1206.5" cy="706" r="1.2" fill="#e8392e"/></svg>
<div class="t" style="left:552px;top:60px;font-size:15.5px;line-height:15px;font-weight:bold;color:#464646;letter-spacing:-1.1px">abc</div>
<div class="t" style="left:15px;top:107px;width:124px;overflow:hidden;letter-spacing:-0.15px">Style de paragraphe par défaut</div>
<div class="t" style="left:233px;top:107px;width:123px;overflow:hidden;letter-spacing:0px">Liberation Serif</div>
<div class="t" style="left:385px;top:107px;width:38px;overflow:hidden;letter-spacing:0px">12 pt</div>
<div class="t" style="left:458px;top:103px;font-size:21px;line-height:18px;font-weight:bold;color:#464646">G</div>
<div class="t" style="left:523.5px;top:101px;font-size:21px;line-height:18px;color:#464646;-webkit-text-stroke:0.7px #464646">S</div>
<div class="t" style="left:558px;top:103px;font-size:20px;line-height:18px;font-weight:bold;color:#464646">S</div>
<div class="t" style="left:607px;top:100px;font-size:17.5px;line-height:14px;font-weight:bold;color:#f39a1e;-webkit-text-stroke:0.6px #d96a0c">2</div>
<div class="t" style="left:642px;top:111px;font-size:17.5px;line-height:14px;font-weight:bold;color:#f39a1e;-webkit-text-stroke:0.6px #d96a0c">2</div>
<div class="t" style="left:988px;top:103px;font-size:8px;line-height:8px;font-weight:bold;color:#333">1</div>
<div class="t" style="left:988px;top:112px;font-size:8px;line-height:8px;font-weight:bold;color:#333">2</div>
<div class="t" style="left:235.2px;top:138px;width:30px;text-align:center;font-size:10.5px;line-height:11px;color:#6e6862;letter-spacing:0px">1</div>
<div class="t" style="left:310.8px;top:138px;width:30px;text-align:center;font-size:10.5px;line-height:11px;color:#6e6862;letter-spacing:0px">1</div>
<div class="t" style="left:348.6px;top:138px;width:30px;text-align:center;font-size:10.5px;line-height:11px;color:#6e6862;letter-spacing:0px">2</div>
<div class="t" style="left:386.4px;top:138px;width:30px;text-align:center;font-size:10.5px;line-height:11px;color:#6e6862;letter-spacing:0px">3</div>
<div class="t" style="left:424.2px;top:138px;width:30px;text-align:center;font-size:10.5px;line-height:11px;color:#6e6862;letter-spacing:0px">4</div>
<div class="t" style="left:462.0px;top:138px;width:30px;text-align:center;font-size:10.5px;line-height:11px;color:#6e6862;letter-spacing:0px">5</div>
<div class="t" style="left:499.8px;top:138px;width:30px;text-align:center;font-size:10.5px;line-height:11px;color:#6e6862;letter-spacing:0px">6</div>
<div class="t" style="left:537.6px;top:138px;width:30px;text-align:center;font-size:10.5px;line-height:11px;color:#6e6862;letter-spacing:0px">7</div>
<div class="t" style="left:575.4px;top:138px;width:30px;text-align:center;font-size:10.5px;line-height:11px;color:#6e6862;letter-spacing:0px">8</div>
<div class="t" style="left:613.2px;top:138px;width:30px;text-align:center;font-size:10.5px;line-height:11px;color:#6e6862;letter-spacing:0px">9</div>
<div class="t" style="left:651.0px;top:138px;width:30px;text-align:center;font-size:10.5px;line-height:11px;color:#6e6862;letter-spacing:-0.6px">10</div>
<div class="t" style="left:688.7px;top:138px;width:30px;text-align:center;font-size:10.5px;line-height:11px;color:#6e6862;letter-spacing:-0.6px">11</div>
<div class="t" style="left:726.5px;top:138px;width:30px;text-align:center;font-size:10.5px;line-height:11px;color:#6e6862;letter-spacing:-0.6px">12</div>
<div class="t" style="left:764.3px;top:138px;width:30px;text-align:center;font-size:10.5px;line-height:11px;color:#6e6862;letter-spacing:-0.6px">13</div>
<div class="t" style="left:802.1px;top:138px;width:30px;text-align:center;font-size:10.5px;line-height:11px;color:#6e6862;letter-spacing:-0.6px">14</div>
<div class="t" style="left:839.9px;top:138px;width:30px;text-align:center;font-size:10.5px;line-height:11px;color:#6e6862;letter-spacing:-0.6px">15</div>
<div class="t" style="left:877.7px;top:138px;width:30px;text-align:center;font-size:10.5px;line-height:11px;color:#6e6862;letter-spacing:-0.6px">16</div>
<div class="t" style="left:915.5px;top:138px;width:30px;text-align:center;font-size:10.5px;line-height:11px;color:#6e6862;letter-spacing:-0.6px">17</div>
<div class="t" style="left:953.3px;top:138px;width:30px;text-align:center;font-size:10.5px;line-height:11px;color:#6e6862;letter-spacing:-0.6px">18</div>
<div class="t" style="left:1219px;top:699px;font-size:10px;line-height:10px;color:#fff;font-weight:bold;letter-spacing:-0.65px">Screenpresso</div>
<div class="t" style="left:1255px;top:707px;font-size:10px;line-height:10px;color:#fff;font-weight:bold;letter-spacing:-0.5px">.com</div>
</body></html>
